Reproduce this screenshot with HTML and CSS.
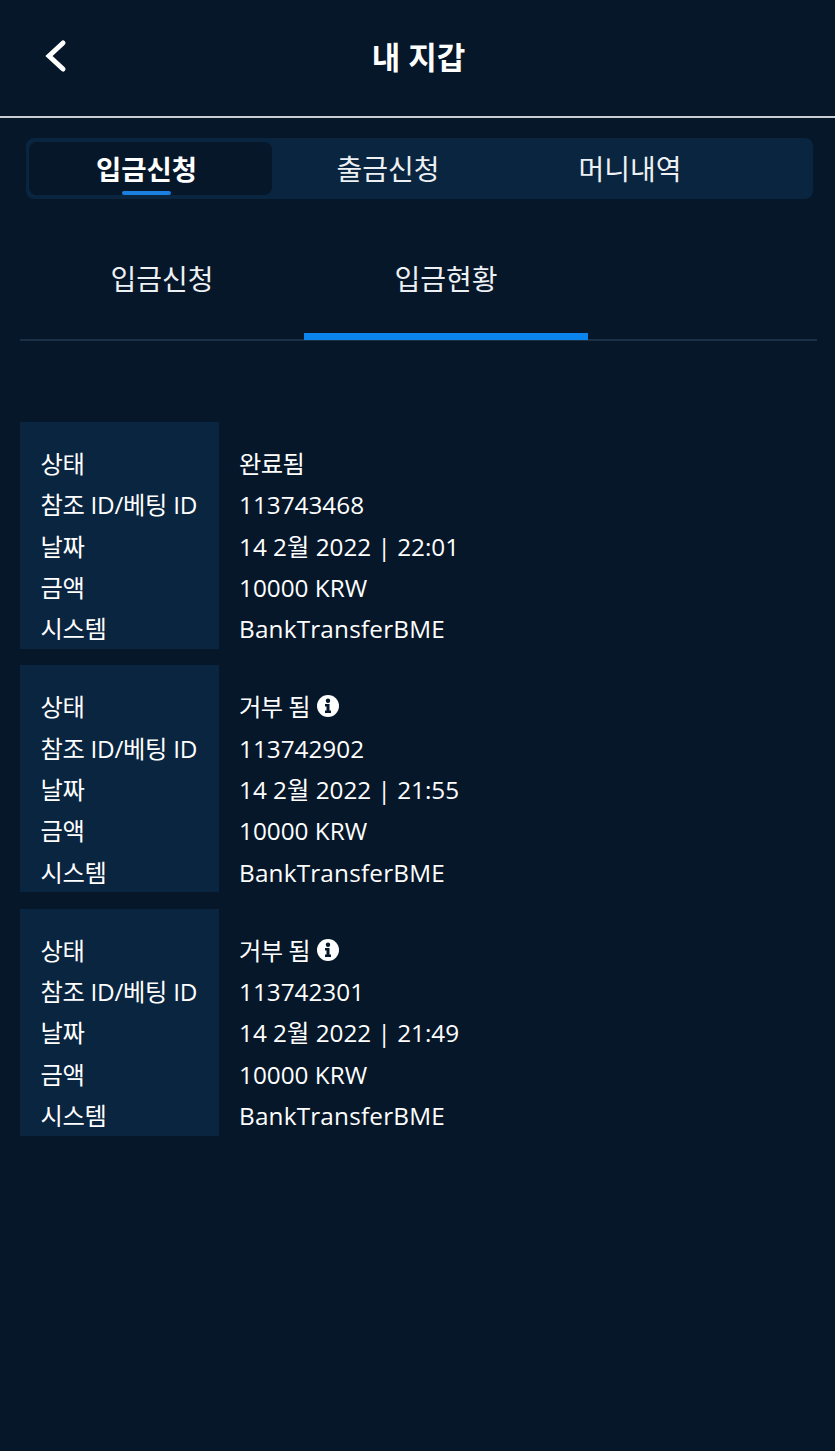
FILE: index.html
```html
<!DOCTYPE html>
<html lang="ko">
<head>
<meta charset="utf-8">
<title>내 지갑</title>
<link rel="stylesheet" href="styles.css">
</head>
<body>
<header class="topbar">
  <svg class="back" width="24" height="36" viewBox="0 0 24 36"><path d="M20 5 L6 18 L20 31" fill="none" stroke="#fff" stroke-width="5" stroke-linecap="round" stroke-linejoin="miter"/></svg>
  <h1>내 지갑</h1>
</header>
<nav class="segments">
  <div class="segment active">입금신청<span class="marker"></span></div>
  <div class="segment">출금신청</div>
  <div class="segment">머니내역</div>
</nav>
<nav class="tabs">
  <div class="tab">입금신청</div>
  <div class="tab current">입금현황</div>
</nav>
<main class="records">
  <section class="record">
    <dl class="labels"><dt>상태</dt><dt>참조 ID/베팅 ID</dt><dt>날짜</dt><dt>금액</dt><dt>시스템</dt></dl>
    <dl class="values"><dd class="status">완료됨</dd><dd>113743468</dd><dd>14 2월 2022 | 22:01</dd><dd>10000 KRW</dd><dd class="system">BankTransferBME</dd></dl>
  </section>
  <section class="record">
    <dl class="labels"><dt>상태</dt><dt>참조 ID/베팅 ID</dt><dt>날짜</dt><dt>금액</dt><dt>시스템</dt></dl>
    <dl class="values"><dd class="status">거부 됨 <svg class="info" width="22" height="22" viewBox="0 0 22 22"><circle cx="11" cy="11" r="11" fill="#fff"/><circle cx="11" cy="5.800" r="2.200" fill="#051729"/><path d="M8 9h4.500v6.500h1.500v2.500h-6v-2.500h1.500v-4h-1.500z" fill="#051729"/></svg></dd><dd>113742902</dd><dd>14 2월 2022 | 21:55</dd><dd>10000 KRW</dd><dd class="system">BankTransferBME</dd></dl>
  </section>
  <section class="record">
    <dl class="labels"><dt>상태</dt><dt>참조 ID/베팅 ID</dt><dt>날짜</dt><dt>금액</dt><dt>시스템</dt></dl>
    <dl class="values"><dd class="status">거부 됨 <svg class="info" width="22" height="22" viewBox="0 0 22 22"><circle cx="11" cy="11" r="11" fill="#fff"/><circle cx="11" cy="5.800" r="2.200" fill="#051729"/><path d="M8 9h4.500v6.500h1.500v2.500h-6v-2.500h1.500v-4h-1.500z" fill="#051729"/></svg></dd><dd>113742301</dd><dd>14 2월 2022 | 21:49</dd><dd>10000 KRW</dd><dd class="system">BankTransferBME</dd></dl>
  </section>
</main>
</body>
</html>
```
FILE: styles.css
```css
* { box-sizing: border-box; }
html, body { margin: 0; padding: 0; }
body {
  width: 835px;
  height: 1451px;
  overflow: hidden;
  background: #051729;
  color: #fff;
  font-family: "Open Sans", "Noto Sans CJK KR", sans-serif;
}
.topbar {
  height: 118px;
  border-bottom: 2px solid #c9ced3;
  display: flex;
  align-items: center;
  justify-content: center;
  position: relative;
}
.topbar h1 {
  margin: 0 0 2px 2px;
  font-size: 31px;
  font-weight: 700;
  line-height: 40px;
}
.back { position: absolute; left: 43px; top: 38px; }
.segments {
  margin: 20px 22px 0 26px;
  height: 61px;
  padding: 4px 3px;
  background: #0a253f;
  border-radius: 8px;
  display: grid;
  grid-template-columns: repeat(3, 242px);
}
.segment {
  position: relative;
  display: flex;
  align-items: center;
  justify-content: center;
  font-size: 28px;
  padding: 0 8px 1px 0;
  color: #eef1f4;
}
.segment.active {
  margin-right: -1px;
  background: #051729;
  border-radius: 8px;
  font-size: 27.500px;
  font-weight: 700;
  color: #fff;
}
.marker {
  position: absolute;
  left: 93px;
  bottom: 0;
  width: 49px;
  height: 4px;
  border-radius: 2px;
  background: #1b7fe0;
}
.tabs {
  margin: 20px 18px 0 20px;
  height: 122px;
  border-bottom: 2px solid #1b2f45;
  display: grid;
  grid-template-columns: 284px 284px;
}
.tab {
  display: flex;
  align-items: center;
  justify-content: center;
  font-size: 28px;
  padding-bottom: 2px;
  color: #eef1f4;
}
.tab.current {
  border-bottom: 7px solid #0b84ee;
  margin-bottom: -1px;
  padding: 4px 0 0;
}
.records {
  margin: 81px 0 0 20px;
  display: flex;
  flex-direction: column;
  gap: 16.400px;
}
.record {
  display: flex;
  height: 227px;
}
.labels, .values {
  margin: 0;
  padding-top: 21px;
  font-size: 24.300px;
  line-height: 41.300px;
}
.labels {
  width: 199px;
  padding-left: 20.500px;
  background: #0a253f;
  letter-spacing: -0.3px;
}
.values { padding-left: 20px; }
.labels dt, .values dd { margin: 0; height: 41.300px; white-space: nowrap; }
.values .status { letter-spacing: -0.6px; }
.values .system { letter-spacing: 0.2px; }
.info { vertical-align: -1px; margin-left: 1px; }
```
